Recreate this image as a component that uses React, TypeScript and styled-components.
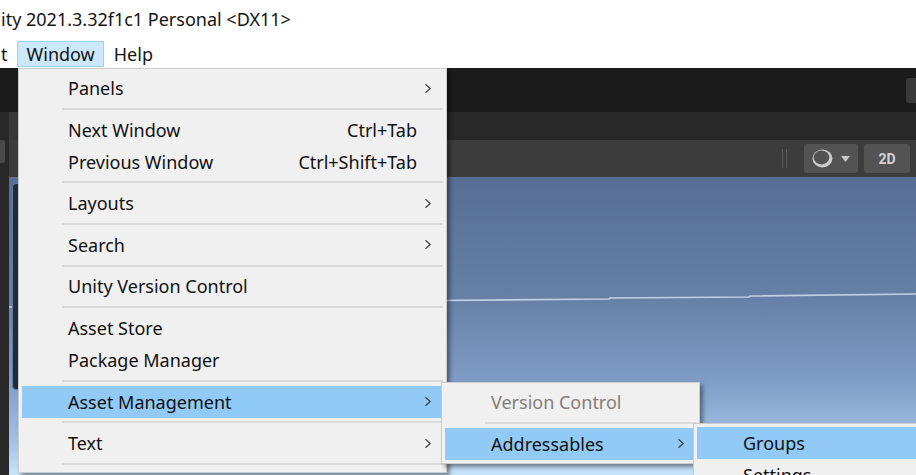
import React from "react";
import styled, { createGlobalStyle } from "styled-components";

const GlobalStyle = createGlobalStyle`
  html, body { margin: 0; padding: 0; background: #ffffff; overflow: hidden; }
  body { font-family: "Noto Sans", "Noto Sans CJK SC", sans-serif; }
`;

const Root = styled.div`
  position: relative;
  width: 916px;
  height: 475px;
  overflow: hidden;
  display: flex;
  flex-direction: column;
  background: #ffffff;
  font-family: "Noto Sans", "Noto Sans CJK SC", sans-serif;
  font-size: 18px;
  color: #111111;
`;

const TitleBar = styled.div`
  height: 40px;
  box-sizing: border-box;
  padding: 0 0 2px 1px;
  display: flex;
  align-items: center;
  white-space: nowrap;
  color: #141414;
`;

const MenuBar = styled.div`
  height: 28px;
  display: flex;
  align-items: flex-start;
  white-space: nowrap;
`;

const MenuBarItem = styled.div<{ $open?: boolean; $cut?: boolean }>`
  height: 26px;
  margin-top: 1px;
  box-sizing: border-box;
  display: flex;
  align-items: center;
  padding: ${(p) => (p.$cut ? "0 8px 0 0" : "0 8px 0 9px")};
  border: 1px solid ${(p) => (p.$open ? "#99d1ff" : "transparent")};
  background: ${(p) => (p.$open ? "#cce8ff" : "transparent")};
  color: #141414;
`;

const Editor = styled.div`
  flex: 1;
  display: flex;
  flex-direction: column;
  background: #1b1b1b;
`;

const TopBar = styled.div`
  height: 44px;
  display: flex;
  justify-content: flex-end;
  align-items: flex-start;
`;

const TopButton = styled.div`
  margin-top: 10px;
  width: 40px;
  height: 25px;
  margin-right: -30px;
  border-radius: 3px;
  background: #3a3a3a;
`;

const Body = styled.div`
  flex: 1;
  display: flex;
`;

const LeftStrip = styled.div`
  width: 9px;
  background: #282828;
  padding-top: 28px;
  box-sizing: border-box;
`;

const StripButton = styled.div`
  width: 5px;
  height: 23px;
  background: #4a4a4a;
  border-radius: 0 2px 2px 0;
`;

const SceneWindow = styled.div`
  flex: 1;
  display: flex;
  flex-direction: column;
`;

const TabBar = styled.div`
  height: 28px;
  background: #282828;
  display: flex;
`;

const SceneTab = styled.div`
  width: 140px;
  background: #383838;
`;

const Toolbar = styled.div`
  height: 37px;
  background: #3c3c3c;
  display: flex;
  justify-content: flex-end;
  align-items: center;
  padding-right: 6px;
`;

const DoubleSep = styled.div`
  width: 5px;
  height: 19px;
  border-left: 1px solid #5a5a5a;
  border-right: 1px solid #5a5a5a;
  box-sizing: border-box;
  margin-right: 11px;
`;

const ToolButton = styled.div<{ $w: number }>`
  width: ${(p) => p.$w}px;
  height: 29px;
  border-radius: 3px;
  background: #535353;
  display: flex;
  align-items: center;
  justify-content: center;
  gap: 8px;
  margin-left: 6px;
  color: #d2d2d2;
  font-family: "Roboto", "Noto Sans", sans-serif;
  font-weight: 700;
  font-size: 14px;
`;

const SceneView = styled.div`
  flex: 1;
  position: relative;
  background: linear-gradient(
    to bottom,
    #566e96 0px,
    #6780a8 123px,
    #7f9cc6 203px,
    #a2c0e2 263px,
    #c8e4fa 298px
  );
`;

const Horizon = styled.svg`
  position: absolute;
  left: 0;
  top: 0;
  width: 100%;
  height: 100%;
`;

const OverlayPanel = styled.div`
  position: absolute;
  left: 3px;
  top: 6px;
  width: 40px;
  height: 207px;
  box-sizing: border-box;
  border: 1px solid #5d7cab;
  border-radius: 4px;
  background: #262a31;
`;

const MenuPanel = styled.div<{ $x: number; $y: number; $w: number }>`
  position: absolute;
  left: ${(p) => p.$x}px;
  top: ${(p) => p.$y}px;
  width: ${(p) => p.$w}px;
  box-sizing: border-box;
  background: #f0f0f0;
  border: 1px solid #cccccc;
  padding: 3px;
  box-shadow: 3px 3px 4px rgba(0, 0, 0, 0.4);
  display: flex;
  flex-direction: column;
  white-space: nowrap;
`;

const Item = styled.div<{ $active?: boolean; $disabled?: boolean }>`
  height: 32px;
  flex: none;
  display: flex;
  align-items: center;
  padding-left: 46px;
  background: ${(p) => (p.$active ? "#91c9f7" : "transparent")};
  color: ${(p) => (p.$disabled ? "#857d79" : "#111111")};
`;

const Label = styled.span`
  flex: 1;
`;

const Shortcut = styled.span`
  color: #111111;
`;

const ArrowCell = styled.span`
  width: 26px;
  flex: none;
  display: flex;
  align-items: center;
  padding-left: 7px;
  box-sizing: border-box;
`;

const Separator = styled.div`
  height: 9.6px;
  flex: none;
  display: flex;
  align-items: center;
  padding-left: 40px;
  &::before {
    content: "";
    flex: 1;
    height: 2px;
    background: #d9d9d9;
  }
`;

const Chevron = () => (
  <svg width="8" height="11" viewBox="0 0 8 11">
    <path d="M1.5 1.2 L6.2 5.5 L1.5 9.8" fill="none" stroke="#3c3c3c" strokeWidth="1.2" />
  </svg>
);

const ShadingIcon = () => (
  <svg width="21" height="19" viewBox="0 0 21 19">
    <ellipse cx="10.5" cy="9.5" rx="10" ry="9" fill="#cccccc" />
    <ellipse cx="9.5" cy="8.4" rx="7.8" ry="7" fill="#535353" />
  </svg>
);

const DropTriangle = () => (
  <svg width="9" height="6" viewBox="0 0 9 6">
    <path d="M0 0 H9 L4.5 6 Z" fill="#c8c8c8" />
  </svg>
);

type Row =
  | { sep: true }
  | { label: string; shortcut?: string; sub?: boolean; active?: boolean; disabled?: boolean };

const windowMenu: Row[] = [
  { label: "Panels", sub: true },
  { sep: true },
  { label: "Next Window", shortcut: "Ctrl+Tab" },
  { label: "Previous Window", shortcut: "Ctrl+Shift+Tab" },
  { sep: true },
  { label: "Layouts", sub: true },
  { sep: true },
  { label: "Search", sub: true },
  { sep: true },
  { label: "Unity Version Control" },
  { sep: true },
  { label: "Asset Store" },
  { label: "Package Manager" },
  { sep: true },
  { label: "Asset Management", sub: true, active: true },
  { sep: true },
  { label: "Text", sub: true },
  { sep: true },
];

const assetMenu: Row[] = [
  { label: "Version Control", disabled: true },
  { sep: true },
  { label: "Addressables", sub: true, active: true },
];

const addrMenu: Row[] = [
  { label: "Groups", active: true },
  { label: "Settings" },
];

const Menu = ({ rows, x, y, w }: { rows: Row[]; x: number; y: number; w: number }) => (
  <MenuPanel $x={x} $y={y} $w={w}>
    {rows.map((r, i) =>
      "sep" in r ? (
        <Separator key={i} />
      ) : (
        <Item key={i} $active={r.active} $disabled={r.disabled}>
          <Label>{r.label}</Label>
          {r.shortcut && <Shortcut>{r.shortcut}</Shortcut>}
          <ArrowCell>{r.sub && <Chevron />}</ArrowCell>
        </Item>
      )
    )}
  </MenuPanel>
);

export default function App() {
  return (
    <Root>
      <GlobalStyle />
      <TitleBar>ity 2021.3.32f1c1 Personal &lt;DX11&gt;</TitleBar>
      <MenuBar>
        <MenuBarItem $cut>t</MenuBarItem>
        <MenuBarItem $open>Window</MenuBarItem>
        <MenuBarItem>Help</MenuBarItem>
      </MenuBar>
      <Editor>
        <TopBar>
          <TopButton />
        </TopBar>
        <Body>
          <LeftStrip>
            <StripButton />
          </LeftStrip>
          <SceneWindow>
            <TabBar>
              <SceneTab />
            </TabBar>
            <Toolbar>
              <DoubleSep />
              <ToolButton $w={54}>
                <ShadingIcon />
                <DropTriangle />
              </ToolButton>
              <ToolButton $w={46}>2D</ToolButton>
            </Toolbar>
            <SceneView>
              <Horizon>
                <polyline
                  points="0,130 230,127.5 231,126.5 370,125 371,124 600,122 601,121 740,120 741,119 907,117"
                  fill="none"
                  stroke="#c3d0e3"
                  strokeWidth="1.6"
                />
              </Horizon>
              <OverlayPanel />
            </SceneView>
          </SceneWindow>
        </Body>
      </Editor>
      <Menu rows={windowMenu} x={18} y={68} w={429} />
      <Menu rows={assetMenu} x={441} y={382} w={259} />
      <Menu rows={addrMenu} x={693} y={423} w={260} />
    </Root>
  );
}
